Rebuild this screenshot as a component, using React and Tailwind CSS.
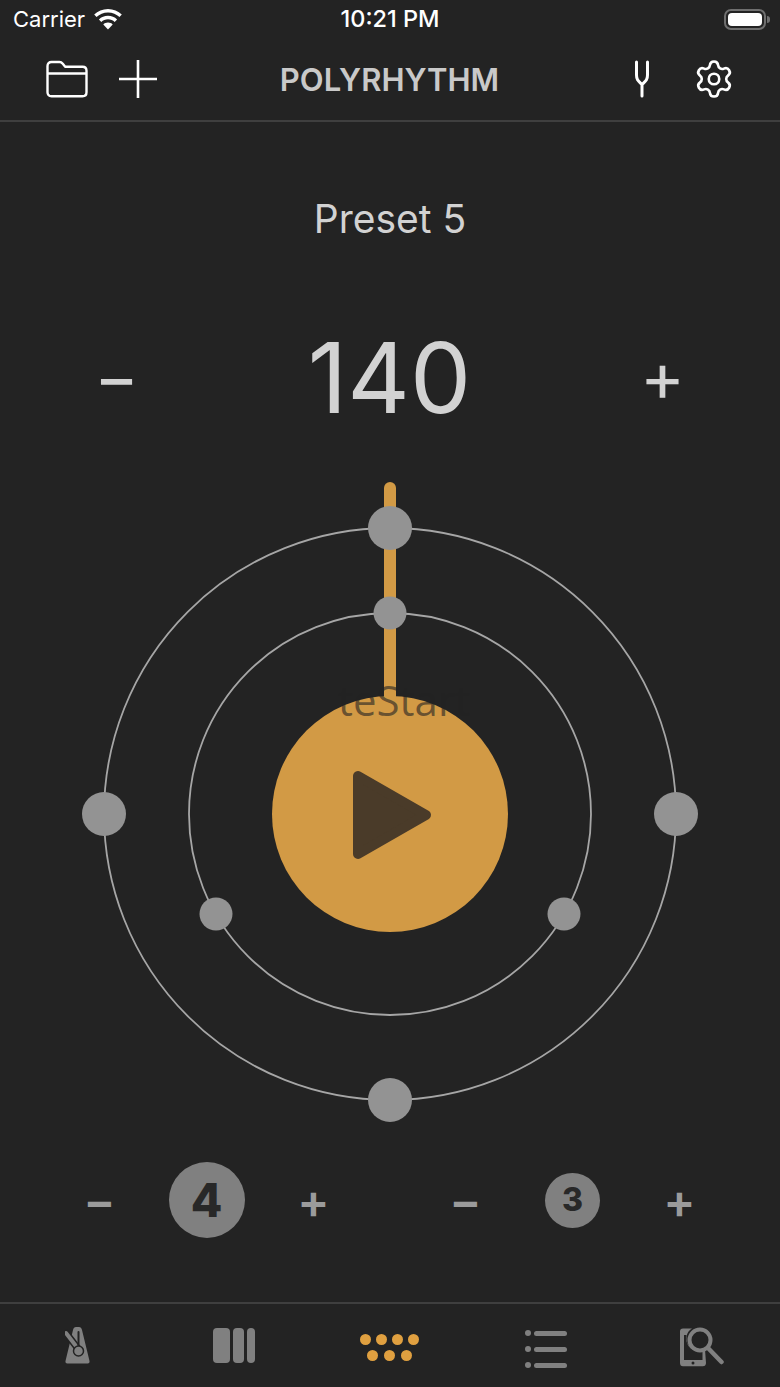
import { Settings } from "lucide-react";

const outerNodes = [
  [390, 528],
  [676, 814],
  [390, 1100],
  [104, 814],
];
const innerNodes = [
  [390, 613],
  [564, 914],
  [216, 914],
];

function StatusBar() {
  return (
    <div className="h-[38px] relative flex items-center justify-between pl-[13px] pr-[10px] text-white text-[22px] font-['Inter',sans-serif]">
      <div className="flex items-center gap-[9px]">
        <span>Carrier</span>
        <svg width="28" height="21" viewBox="0 0 28 21" fill="white">
          <path d="M14 0C8.6 0 3.8 2.1 0.2 5.6l2.3 2.5C5.5 5.2 9.5 3.4 14 3.4s8.5 1.8 11.5 4.7l2.3-2.5C24.2 2.1 19.4 0 14 0z" />
          <path d="M14 6.8c-3.5 0-6.7 1.4-9.1 3.6l2.4 2.5c1.8-1.6 4.1-2.7 6.7-2.7s4.9 1.1 6.7 2.7l2.4-2.5C20.7 8.2 17.5 6.8 14 6.8z" />
          <path d="M14 13.6c-1.9 0-3.5 0.7-4.7 1.8L14 20.6l4.7-5.2c-1.2-1.1-2.8-1.8-4.7-1.8z" />
        </svg>
      </div>
      <span className="absolute inset-x-0 text-center text-[23.500px] font-medium">10:21 PM</span>
      <div className="flex items-center gap-[1px]">
        <div className="w-[42px] h-[21px] rounded-[7px] border-2 border-[#6f6f6f] p-[2px]">
          <div className="w-full h-full rounded-[4px] bg-white" />
        </div>
        <div className="w-[3px] h-[7px] rounded-r-full bg-[#6f6f6f]" />
      </div>
    </div>
  );
}

function NavBar() {
  return (
    <div className="h-[84px] flex items-center px-[46px] border-b-2 border-[#3f3f3f] font-['Inter',sans-serif]">
      <div className="flex-1 flex items-center gap-[31px]">
        <svg width="42" height="38" viewBox="0 0 42 38" fill="none" stroke="white" strokeWidth="2.4" strokeLinejoin="round">
          <path d="M1.5 6c0-2.4 1.5-4 4-4h8c1.5 0 2.3.6 3.3 1.8l2.4 3h17.3c2.5 0 4 1.6 4 4v21.4c0 2.4-1.5 4-4 4H5.500c-2.500 0-4-1.600-4-4z" />
          <path d="M1.500 13.500h39" />
        </svg>
        <svg width="38" height="38" viewBox="0 0 38 38" stroke="white" strokeWidth="2.6">
          <path d="M19 0v38M0 19h38" />
        </svg>
      </div>
      <h1 className="text-[31px] font-semibold text-[#c9c9c9] leading-none">POLYRHYTHM</h1>
      <div className="flex-1 flex items-center justify-end gap-[45px] pr-[1px]">
        <svg width="16" height="38" viewBox="0 0 16 38" fill="none" stroke="white" strokeWidth="3" strokeLinecap="round" className="ml-[1px]">
          <path d="M2.500 2v13c0 5 2 6 5.500 9.500 3.500-3.500 5.500-4.500 5.500-9.500V2M8 24v12" />
        </svg>
        <Settings size={42} strokeWidth={1.5} color="white" className="-mx-[2px]" />
      </div>
    </div>
  );
}

function Polyrhythm() {
  return (
    <div className="relative h-[660px] mt-[33px]">
      <svg width="780" height="660" viewBox="0 470 780 660">
        <circle cx="390" cy="814" r="286" fill="none" stroke="#a6a6a6" strokeWidth="1.800" />
        <circle cx="390" cy="814" r="201" fill="none" stroke="#a6a6a6" strokeWidth="1.800" />
        <rect x="384" y="482" width="12" height="240" rx="6" fill="#d29a45" />
        {outerNodes.map(([x, y]) => (
          <circle key={`${x}-${y}`} cx={x} cy={y} r="22" fill="#939393" />
        ))}
        {innerNodes.map(([x, y]) => (
          <circle key={`${x}-${y}`} cx={x} cy={y} r="16.500" fill="#939393" />
        ))}
      </svg>
      <button className="absolute left-[272px] top-[226px] w-[236px] h-[236px] rounded-full bg-[#d29a45] flex items-center justify-center">
        <svg width="236" height="236" viewBox="272 696 236 236">
          <path d="M358 776v78l68-39z" fill="#4a3b29" stroke="#4a3b29" strokeWidth="10" strokeLinejoin="round" />
        </svg>
      </button>
      <span className="absolute left-[338px] top-[205px] text-[42px] leading-[50px] whitespace-nowrap text-[#222222]/60 font-['Open_Sans',sans-serif]">
        teStart
      </span>
    </div>
  );
}

function BeatStepper({ value, circle, text }) {
  return (
    <div className="w-[321px] grid grid-cols-3 items-center justify-items-center text-[#9b9b9b]">
      <span className="text-[48px] font-semibold leading-none mt-[2px]">−</span>
      <div className={`${circle} rounded-full bg-[#808080] flex items-center justify-center font-extrabold text-[#282828] ${text}`}>
        {value}
      </div>
      <span className="text-[48px] font-semibold leading-none mt-[2px]">+</span>
    </div>
  );
}

function TabBar() {
  return (
    <div className="h-[85px] grid grid-cols-5 border-t-2 border-[#3f3f3f] pt-[23px] justify-items-center items-start">
      <svg width="26" height="37" viewBox="0 0 26 37">
        <path d="M8 3c.4-1.800 1.500-3 3-3h3c1.500 0 2.600 1.200 3 3l7.500 31c.3 1.500-.4 2.500-1.800 2.500H2.300C.9 36.500.2 35.500.5 34z" fill="#808080" />
        <path d="M1 6l13 17" stroke="#232323" strokeWidth="7" strokeLinecap="round" />
        <path d="M1 6l13 17" stroke="#808080" strokeWidth="4" strokeLinecap="round" />
        <path d="M13.500 5v17" stroke="#232323" strokeWidth="2" strokeLinecap="round" />
        <circle cx="13.500" cy="24" r="5" fill="#808080" stroke="#232323" strokeWidth="1.500" />
      </svg>
      <div className="flex gap-[3px] h-[35px] mt-[1px]">
        <div className="w-[17px] rounded-[4px] bg-[#808080]" />
        <div className="w-[11px] rounded-[4px] bg-[#808080]" />
        <div className="w-[8px] rounded-[4px] bg-[#808080]" />
      </div>
      <div className="flex flex-col items-center gap-[5px] mt-[7px] -ml-[1px]">
        <div className="flex gap-[5px]">
          {[0, 1, 2, 3].map((i) => (
            <div key={i} className="w-[11px] h-[11px] rounded-full bg-[#e0a040]" />
          ))}
        </div>
        <div className="flex gap-[6px]">
          {[0, 1, 2].map((i) => (
            <div key={i} className="w-[11px] h-[11px] rounded-full bg-[#e0a040]" />
          ))}
        </div>
      </div>
      <div className="flex flex-col gap-[10px] mt-[3px]">
        {[0, 1, 2].map((i) => (
          <div key={i} className="flex items-center gap-[3px]">
            <div className="w-[6px] h-[6px] rounded-full bg-[#808080]" />
            <div className="w-[33px] h-[5px] rounded-full bg-[#808080]" />
          </div>
        ))}
      </div>
      <svg width="44" height="40" viewBox="0 0 44 40" fill="none">
        <path d="M3 1.500h9C6 5 4.500 13 9 19c3.500 4.500 10 6 16 3.500L26 36c0 2-1.200 3.300-3.200 3.300H3C1 39.300 0 38 0 36V4.500C0 2.600 1 1.500 3 1.500z" fill="#808080" />
        <path d="M4 8v25h18.500v-9c-5 1-11-.500-14-5-2-3-3-7-2-11z" fill="#232323" />
        <circle cx="13" cy="36" r="1.500" fill="#232323" />
        <circle cx="20" cy="13" r="10.500" stroke="#808080" strokeWidth="4" />
        <path d="M28 21l13.500 14" stroke="#808080" strokeWidth="4.500" strokeLinecap="round" />
      </svg>
    </div>
  );
}

export default function App() {
  return (
    <div className="w-[780px] h-[1387px] bg-[#232323] flex flex-col overflow-hidden font-['Inter',sans-serif]">
      <StatusBar />
      <NavBar />
      <div className="flex-1 flex flex-col">
        <div className="h-[74px] mt-[59px] flex items-center justify-center">
          <h2 className="text-[39px] text-[#d2d2d2] leading-none">Preset 5</h2>
        </div>
        <div className="h-[120px] mt-[62px] pl-[94px] pr-[98px] flex items-center justify-between text-[#d2d2d2]">
          <span className="w-[42px] text-center text-[68px] leading-none -mt-[2px]">−</span>
          <span className="text-[97px] font-[370] leading-none ml-[3px]">140</span>
          <span className="w-[42px] text-center text-[68px] leading-none -mt-[3px]">+</span>
        </div>
        <Polyrhythm />
      </div>
      <div className="h-[76px] mb-[64px] pl-[46px] pr-[47px] flex justify-between">
        <BeatStepper value={4} circle="w-[76px] h-[76px]" text="text-[46px]" />
        <BeatStepper value={3} circle="w-[55px] h-[55px]" text="text-[32px]" />
      </div>
      <TabBar />
    </div>
  );
}
